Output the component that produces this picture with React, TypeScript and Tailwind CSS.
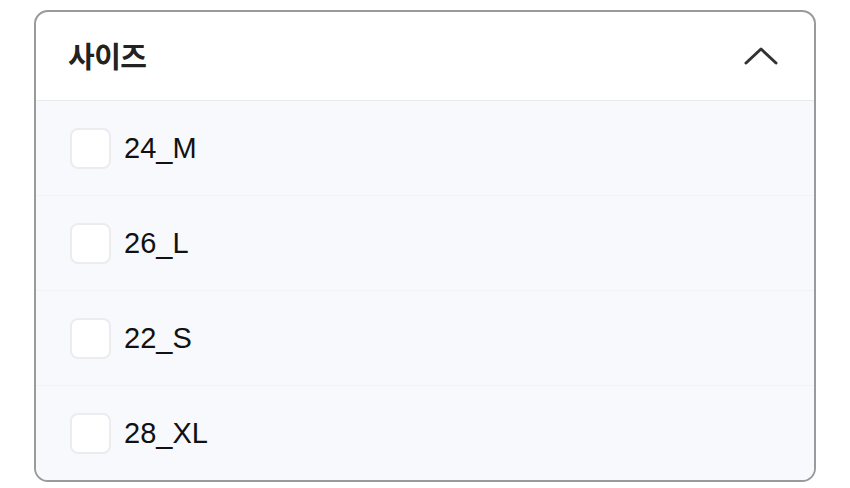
const sizes = ["24_M", "26_L", "22_S", "28_XL"];

export default function App() {
  return (
    <div
      className="w-[850px] h-[488px] bg-white pt-[10px] pl-[34px]"
      style={{ fontFamily: '"Helvetica Neue", "Liberation Sans", Arial, "Noto Sans CJK KR", sans-serif' }}
    >
      <div className="w-[782px] h-[472px] border-2 border-[#9a9a9a] rounded-[14px] overflow-hidden bg-white flex flex-col">
        <div className="h-[89px] flex items-center justify-between pl-[32px] pr-[36px] border-b border-[#e8eaee] shrink-0">
          <span
            className="text-[29px] font-bold text-[#222] tracking-[-0.5px]"
            style={{ fontFamily: '"Noto Sans CJK KR", sans-serif' }}
          >
            사이즈
          </span>
          <svg width="34" height="20" viewBox="0 0 34 20" fill="none">
            <path d="M2 17 L17 3 L32 17" stroke="#333" strokeWidth="3" strokeLinecap="round" strokeLinejoin="round" />
          </svg>
        </div>
        <div className="flex-1 flex flex-col bg-[#f8f9fc]">
          {sizes.map((s, i) => (
            <div
              key={s}
              className={`flex-1 flex items-center pl-[34px] gap-[13px] ${
                i < sizes.length - 1 ? "border-b border-[#f2f3f6]" : ""
              }`}
            >
              <div className="w-[41px] h-[41px] rounded-[8px] border-2 border-[#ebecef] bg-white" />
              <span className="text-[29px] text-[#111] leading-none">{s}</span>
            </div>
          ))}
        </div>
      </div>
    </div>
  );
}
